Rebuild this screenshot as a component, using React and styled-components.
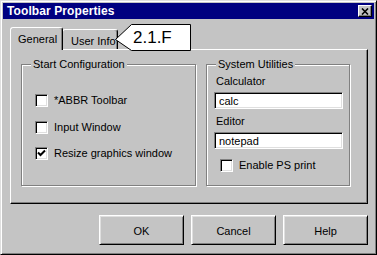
import React from "react";
import styled, { createGlobalStyle } from "styled-components";

const GlobalStyle = createGlobalStyle`
  html, body {
    margin: 0;
    padding: 0;
    background: #ffffff;
  }
  body {
    font-family: "Liberation Sans", Arial, sans-serif;
    font-size: 11px;
    color: #000;
  }
  * {
    box-sizing: border-box;
  }
`;

const Window = styled.div`
  position: relative;
  width: 377px;
  height: 255px;
  background: #c4c4c4;
  border: 1px solid;
  border-color: #dfdfdf #000 #000 #dfdfdf;
  box-shadow: inset 1px 1px 0 #fff, inset -1px -1px 0 #808080;
  padding: 2px;
  display: flex;
  flex-direction: column;
`;

const TitleBar = styled.div`
  height: 16px;
  background: #000080;
  display: flex;
  align-items: center;
  justify-content: space-between;
  padding: 0 2px 0 4px;
`;

const TitleText = styled.span`
  color: #fff;
  font-weight: 700;
  font-size: 12px;
  letter-spacing: 0.1px;
`;

const CloseButton = styled.div`
  width: 14px;
  height: 12px;
  background: #c4c4c4;
  border: 1px solid;
  border-color: #fff #000 #000 #fff;
  box-shadow: inset -1px -1px 0 #808080;
  display: flex;
  align-items: center;
  justify-content: center;
`;

const Body = styled.div`
  display: flex;
  flex-direction: column;
  padding: 8px 6px 0 7px;
`;

const Tabs = styled.div`
  display: flex;
  align-items: flex-end;
  height: 22px;
`;

const Tab = styled.div`
  position: relative;
  z-index: ${({ $active }) => ($active ? 2 : 1)};
  width: ${({ $width }) => $width}px;
  height: ${({ $active }) => ($active ? 23 : 20)}px;
  margin-bottom: ${({ $active }) => ($active ? -1 : 0)}px;
  margin-left: ${({ $active }) => ($active ? 0 : -1)}px;
  padding: ${({ $active }) => ($active ? "5px 0 0 7px" : "5px 0 0 8px")};
  background: #c4c4c4;
  border: 1px solid;
  border-bottom: none;
  border-color: #fff #000 transparent #fff;
  border-radius: 3px 3px 0 0;
  box-shadow: inset -1px 0 0 #808080;
  white-space: nowrap;
`;

const Panel = styled.div`
  height: 155px;
  border: 1px solid;
  border-color: #fff #000 #000 #fff;
  box-shadow: inset -1px -1px 0 #808080;
  padding: 7px 0 0 10px;
  display: grid;
  grid-template-columns: 175px 144px;
  column-gap: 10px;
  align-items: start;
`;

const Group = styled.fieldset`
  margin: 0;
  padding: 0;
  height: 129px;
  border: 1px solid #808080;
  box-shadow: 1px 1px 0 #fff, inset 1px 1px 0 #fff;
  display: flex;
  flex-direction: column;
`;

const Legend = styled.legend`
  margin-left: 9px;
  padding: 0 2px;
  line-height: 14px;
  background: #c4c4c4;
  position: relative;
  z-index: 1;
`;

const CheckList = styled.div`
  display: flex;
  flex-direction: column;
  gap: 13.5px;
  padding: 23px 0 0 13px;
`;

const CheckRow = styled.label`
  display: flex;
  align-items: center;
  gap: 6px;
  height: 13px;
  line-height: 13px;
  margin: ${({ $margin }) => $margin || "0"};
`;

const Box = styled.span`
  width: 13px;
  height: 13px;
  flex: none;
  background: #fff;
  border: 1px solid;
  border-color: #808080 #fff #fff #808080;
  box-shadow: inset 1px 1px 0 #000, inset -1px -1px 0 #dfdfdf;
  display: flex;
  align-items: center;
  justify-content: center;
`;

const Fields = styled.div`
  display: flex;
  flex-direction: column;
  padding: 3px 0 0 7px;
`;

const FieldLabel = styled.div`
  line-height: 14px;
  padding-left: 2px;
  margin-top: ${({ $top }) => $top}px;
`;

const TextBox = styled.div`
  width: 129px;
  height: 17px;
  margin-top: 4px;
  background: #fff;
  border: 1px solid;
  border-color: #808080 #fff #fff #808080;
  box-shadow: inset 1px 1px 0 #000, inset -1px -1px 0 #dfdfdf;
  padding: 1px 0 0 4px;
  line-height: 14px;
`;

const ButtonRow = styled.div`
  display: flex;
  justify-content: flex-end;
  gap: 7px;
  margin-top: 11px;
`;

const Button = styled.div`
  width: 85px;
  height: 30px;
  border: 1px solid;
  border-color: #fff #000 #000 #fff;
  box-shadow: inset 1px 1px 0 #dfdfdf, inset -1px -1px 0 #808080;
  display: flex;
  align-items: center;
  justify-content: center;
  padding-top: 1px;
`;

const Callout = styled.div`
  position: absolute;
  left: 114px;
  top: 23px;
  width: 77px;
  height: 28px;
  z-index: 5;
`;

const CalloutText = styled.span`
  position: absolute;
  left: 18px;
  top: 4px;
  font-size: 17px;
  line-height: 20px;
`;

const Check = ({ checked }) => (
  <Box>
    {checked && (
      <svg width="9" height="9" viewBox="0 0 9 9">
        <path d="M1 3.5 L3.5 6 L8 1.5" fill="none" stroke="#000" strokeWidth="2" />
      </svg>
    )}
  </Box>
);

export default function App() {
  return (
    <>
      <GlobalStyle />
      <Window>
        <TitleBar>
          <TitleText>Toolbar Properties</TitleText>
          <CloseButton>
            <svg width="8" height="7" viewBox="0 0 8 7">
              <path d="M1 0.5 L7 6.5 M7 0.5 L1 6.5" stroke="#000" strokeWidth="1.6" />
            </svg>
          </CloseButton>
        </TitleBar>
        <Body>
          <Tabs>
            <Tab $active $width={53}>General</Tab>
            <Tab $width={56}>User Info</Tab>
          </Tabs>
          <Panel>
            <Group>
              <Legend>Start Configuration</Legend>
              <CheckList>
                <CheckRow>
                  <Check />
                  *ABBR Toolbar
                </CheckRow>
                <CheckRow>
                  <Check />
                  Input Window
                </CheckRow>
                <CheckRow>
                  <Check checked />
                  Resize graphics window
                </CheckRow>
              </CheckList>
            </Group>
            <Group>
              <Legend>System Utilities</Legend>
              <Fields>
                <FieldLabel $top={0}>Calculator</FieldLabel>
                <TextBox>calc</TextBox>
                <FieldLabel $top={5}>Editor</FieldLabel>
                <TextBox>notepad</TextBox>
                <CheckRow $margin="10px 0 0 6px">
                  <Check />
                  Enable PS print
                </CheckRow>
              </Fields>
            </Group>
          </Panel>
          <ButtonRow>
            <Button>OK</Button>
            <Button>Cancel</Button>
            <Button>Help</Button>
          </ButtonRow>
        </Body>
        <Callout>
          <svg width="77" height="28" viewBox="0 0 77 28">
            <polygon
              points="0.5,15.5 16.5,0.5 75.5,0.5 75.5,26.5 16.5,26.5"
              fill="#fff"
              stroke="#000"
              strokeWidth="1"
            />
          </svg>
          <CalloutText>2.1.F</CalloutText>
        </Callout>
      </Window>
    </>
  );
}
